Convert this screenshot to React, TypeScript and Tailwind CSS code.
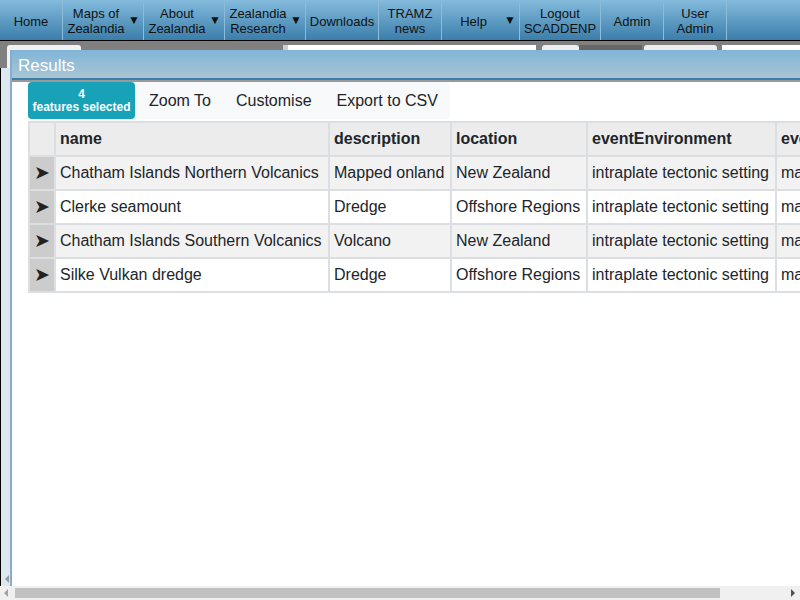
import React from "react";

// --- Data ---

const NAV = [
  { label: ["Home"], w: "w-[63px]" },
  { label: ["Maps of", "Zealandia"], w: "w-[81px]", drop: true },
  { label: ["About", "Zealandia"], w: "w-[81px]", drop: true },
  { label: ["Zealandia", "Research"], w: "w-[81px]", drop: true },
  { label: ["Downloads"], w: "w-[73px]" },
  { label: ["TRAMZ", "news"], w: "w-[63px]" },
  { label: ["Help"], w: "w-[78px]", drop: true },
  { label: ["Logout", "SCADDENP"], w: "w-[81px]" },
  { label: ["Admin"], w: "w-[63px]" },
  { label: ["User", "Admin"], w: "w-[63px]" },
];

const ROWS = [
  ["Chatham Islands Northern Volcanics", "Mapped onland", "New Zealand", "intraplate tectonic setting", "magmatic"],
  ["Clerke seamount", "Dredge", "Offshore Regions", "intraplate tectonic setting", "magmatic"],
  ["Chatham Islands Southern Volcanics", "Volcano", "New Zealand", "intraplate tectonic setting", "magmatic"],
  ["Silke Vulkan dredge", "Dredge", "Offshore Regions", "intraplate tectonic setting", "magmatic"],
];

const COLS = ["name", "description", "location", "eventEnvironment", "eventType"];
const WIDTHS = ["w-[274px]", "w-[122px]", "w-[136px]", "w-[189px]", "w-[120px]"];

export default function App() {
  return (
    <div className="w-[800px] h-[600px] overflow-hidden relative bg-white font-['Liberation_Sans',Arial,sans-serif] text-[#212529]">
      {/* Top nav */}
      <div className="h-[40px] flex bg-gradient-to-b from-[#84bbdd] to-[#3a7eaa]">
        {NAV.map((n, i) => (
          <div
            key={i}
            className={`${n.w} relative flex items-center justify-center border-r border-[#8cbcd9] text-[13px] leading-[15px] text-[#111] text-center pt-[2px]`}
          >
            <div className={n.drop ? "pr-[14px]" : ""}>
              {n.label.map((l) => (
                <div key={l}>{l}</div>
              ))}
            </div>
            {n.drop && <span className="absolute right-[3px] top-[13px] text-[12px]">▼</span>}
          </div>
        ))}
      </div>

      {/* Toolstrip behind the window */}
      <div className="h-[28px] bg-[#808080] border-t border-black flex items-start pt-[4px]">
        <div className="ml-[7px] w-[74px] h-[24px] bg-[#f2f2f2] rounded-t-[3px]" />
        <div className="ml-[202px] w-[5px] h-[24px] bg-[#cfcfcf]" />
        <div className="w-[248px] h-[24px] bg-white" />
        <div className="ml-[6px] w-[37px] h-[24px] bg-[#eeeeee] rounded-t-[3px]" />
        <div className="w-[63px] h-[24px] bg-[#666]" />
        <div className="ml-[2px] w-[73px] h-[24px] bg-[#eeeeee] rounded-t-[3px]" />
        <div className="ml-[5px] flex-1 h-[24px] bg-white" />
      </div>

      {/* Left strip */}
      <div className="absolute left-0 top-[68px] bottom-[14px] w-[10px] bg-[#dde7f0] border-l border-black">
        <span className="absolute left-[4px] bottom-[3px] w-0 h-0 border-y-[4px] border-y-transparent border-r-[4px] border-r-[#999]" />
      </div>

      {/* Results window */}
      <div className="absolute left-[10px] top-[50px] w-[820px] bottom-[14px] bg-white border-l-2 border-[#86acd0] overflow-hidden">
        <div className="h-[30px] bg-gradient-to-b from-[#80b5d8] to-[#a8c5d3] border-b-2 border-[#3a7eaa] px-[6px] pt-[3px] flex items-center text-white text-[17px]">
          Results
        </div>
        <div className="h-[2px] bg-[#999]" />

        <div className="pl-[16px]">
          {/* Toolbar */}
          <div className="w-[422px] h-[37px] bg-[#f8f9fa] rounded-r-[4px] flex items-center">
            <div className="w-[107px] h-[37px] bg-[#17a2b8] rounded-[4px] text-white text-[12px] font-bold leading-[13px] flex flex-col items-center justify-center">
              <span>4</span>
              <span>features selected</span>
            </div>
            <span className="ml-[14px] text-[16px]">Zoom To</span>
            <span className="ml-[25px] text-[16px]">Customise</span>
            <span className="ml-[25px] text-[16px]">Export to CSV</span>
          </div>

          {/* Table */}
          <table className="mt-[2px] table-fixed w-[867px] border-collapse text-[16px] leading-[24px]">
            <colgroup>
              <col className="w-[26px]" />
              {WIDTHS.map((w, i) => (
                <col key={i} className={w} />
              ))}
            </colgroup>
            <thead>
              <tr className="bg-[#ececec]">
                <th className="border-2 border-[#dcdfe2]" />
                {COLS.map((c) => (
                  <th key={c} className="border-2 border-[#dcdfe2] px-[4px] py-[4px] text-left font-bold whitespace-nowrap overflow-hidden">
                    {c}
                  </th>
                ))}
              </tr>
            </thead>
            <tbody>
              {ROWS.map((r, ri) => (
                <tr key={ri} className={ri % 2 === 0 ? "bg-[#f2f2f2]" : "bg-white"}>
                  <td className="border-2 border-[#dcdfe2] bg-[#cccccc] p-0 text-center text-[#222] text-[19px] leading-[24px]">➤</td>
                  {r.map((v, ci) => (
                    <td key={ci} className="border-2 border-[#dcdfe2] px-[4px] py-[4px] whitespace-nowrap overflow-hidden">
                      {v}
                    </td>
                  ))}
                </tr>
              ))}
            </tbody>
          </table>
        </div>
      </div>

      {/* Bottom scrollbar */}
      <div className="absolute left-0 bottom-0 w-[800px] h-[14px] bg-[#f0f0f0] flex items-center">
        <span className="ml-[4px] w-0 h-0 border-y-[4px] border-y-transparent border-r-[4px] border-r-[#a3a3a3]" />
        <div className="ml-[7px] w-[705px] h-[10px] bg-[#c1c1c1]" />
        <span className="ml-auto mr-[5px] w-0 h-0 border-y-[4px] border-y-transparent border-l-[4px] border-l-[#505050]" />
      </div>
    </div>
  );
}
